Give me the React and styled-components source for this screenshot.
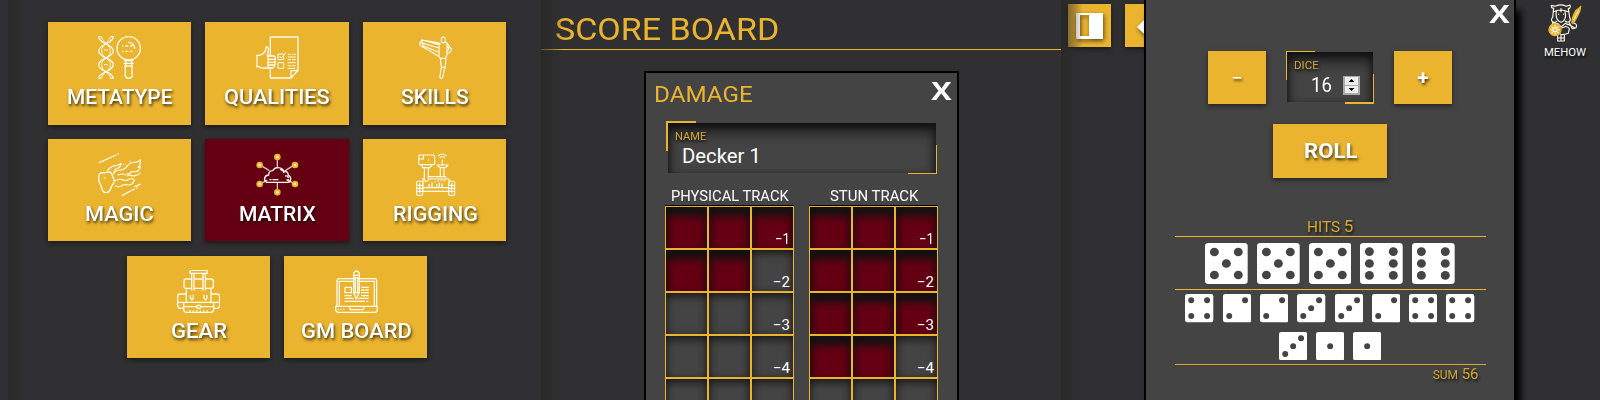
import React, { useLayoutEffect, useRef, useState } from "react";
import styled, { createGlobalStyle, css } from "styled-components";

const gold = "#ebb42f";
const crimson = "#650013";
const slate = "#444444";
const base = "#303032";

const GlobalStyle = createGlobalStyle`
  * { box-sizing: border-box; }
  body { margin: 0; background: ${base}; overflow: hidden; }
  #root { font-family: Roboto, "Liberation Sans", sans-serif; color: #fff; }
`;

/* ---------- text ---------- */

const FitBox = styled.span`
  display: inline-block;
  white-space: pre;
  text-align: left;
`;

const FitText = styled.span`
  display: inline-block;
  transform-origin: left center;
`;

// Stretches its text sideways until it spans the given width.
function Fit({ width, children }) {
  const ref = useRef(null);
  const [scale, setScale] = useState(1);
  useLayoutEffect(() => {
    setScale(width / ref.current.offsetWidth);
  }, [width, children]);
  return (
    <FitBox style={{ width }}>
      <FitText ref={ref} style={{ transform: `scaleX(${scale})` }}>{children}</FitText>
    </FitBox>
  );
}

/* ---------- page ---------- */

const Page = styled.div`
  display: flex;
  width: 1600px;
  height: 400px;
  overflow: hidden;
  background: ${base};
  position: relative;
`;

const Column = styled.section`
  flex: none;
  width: ${(p) => p.$w}px;
  height: 400px;
  position: relative;
  &::before {
    content: "";
    position: absolute;
    inset: 0 auto 0 0;
    width: 22px;
    background: linear-gradient(90deg, rgba(38, 38, 36, 0.7), rgba(42, 42, 42, 0.35) 60%, transparent);
    pointer-events: none;
    z-index: 1;
  }
`;

const Edge = styled.div`
  flex: none;
  width: 8px;
`;

/* ---------- menu ---------- */

const Tiles = styled.nav`
  display: flex;
  flex-wrap: wrap;
  justify-content: center;
  gap: 14.3px;
  padding: 22px 29px 0 34px;
`;

const raised = css`
  border: 0;
  background: ${gold};
  color: #fff;
  box-shadow: 0 2px 5px rgba(0, 0, 0, 0.5);
  text-shadow: 1px 2px 3px rgba(0, 0, 0, 0.75);
`;

const Tile = styled.button`
  ${raised}
  background: ${(p) => (p.$active ? crimson : gold)};
  width: 143.3px;
  height: 102.5px;
  padding: 14px 0 0 1px;
  display: flex;
  flex-direction: column;
  align-items: center;
  gap: 8px;
  font: 500 20.5px/20px Roboto, "Liberation Sans", sans-serif;
`;

const Icon = styled.svg`
  display: block;
  flex: none;
  width: ${(p) => p.$w || 43}px;
  height: ${(p) => p.$h || 43}px;
  fill: none;
  stroke: #fffaf0;
  stroke-width: 4;
  stroke-linecap: round;
  stroke-linejoin: round;
`;

const DnaIcon = () => (
  <Icon viewBox="294 108 129 129">
    <path d="M296 110c1 22 44 22 44 43s-44 20-44 41 43 20 44 41M340 110c-1 22-44 22-44 43s44 20 44 41-43 20-44 41" />
    <path d="M304 110c2 14 27 24 27 43s-26 23-26 41 25 26 27 41M332 110c-2 14-27 24-27 43s26 23 26 41-25 26-27 41M296 110h8M332 110h8M296 235h8M332 235h8M313 150h10M313 194h10" strokeWidth="2.6" />
    <circle cx="386" cy="145" r="35" />
    <path d="M386 127q16 2 18 18M368 138v1M377 138h6M391 138h5M368 154v1M377 154h6M391 154h5" />
    <path d="M374 182h24M372 190h28M374 198h24M376 198v29q1 8 10 8t10-8v-29M377 182v16M395 182v16" />
  </Icon>
);

const FormIcon = () => (
  <Icon viewBox="767 108 129 129">
    <path d="M810 165v-54h83v100l-21 23h-62v-28M872 234v-22h21" />
    <path d="M769 166h7c15-2 21-9 21-25q8-1 7 10l-3 17h21q6 4 1 9 5 5 0 9 4 5-1 9 1 7-6 9h-25q-10 1-15-4l-7-1M770 167v34M803 169v34M804 178h20M804 187h20M804 195h20" />
    <path d="M834 162h16v17h-16zM834 188h16v17h-16zM838 169l5 5 13-16M863 163h8M877 163h8M863 171h22M863 179h8M876 179h9M863 188h22M863 197h9M877 197h8M863 205h20" strokeWidth="3" />
  </Icon>
);

const KickIcon = () => (
  <Icon viewBox="219 108 129 129">
    <path d="M301 115q6-9 12 0v9q-6 10-12 0zM298 132q-3-3-10-4l-45-8-7 9 2 8 31 17 26 16 3 6 17-2 3-12 9-5 5-8-13-19-6-3-10 1M294 134v32M243 120l51 14M239 128l55 16M246 137l48 20M318 131v30M318 138q11 8 0 17M298 174l3 29-5 29q5 6 9 0l8-35 2-21M302 202h9M243 119l3 16" strokeWidth="3.4" />
  </Icon>
);

const MeteorIcon = () => (
  <Icon viewBox="294 459 129 129">
    <path d="M298 488l50-23M354 462h1M367 586l36-19M411 564l1-1M405 560l15-7" />
    <path d="M296 529q2-11 12-11 10 1 17-2 10-1 12 11l5 11q2 11-7 20-5 20-17 20-11 0-14-18-10-16-8-31zM313 534h1" />
    <path d="M321 513q11-16 29-17 8-1 13-6-1 12-11 15-10 4-11 17M341 520q6-10 20-10 14-1 21-13 11-12 25-10 9-1 14-8 2 17-7 23l7-2q-2 17-22 15-8-1-16 13M354 525q14-6 24 0M345 543q11-8 23-4 8 5 16 0 10-6 19 1-4 15-18 15-15-3-21 3-8 4-17 0M382 521q10 10 26 5 9-1 13-8M371 493h1M390 484h1" strokeWidth="3.5" />
  </Icon>
);

const CloudIcon = () => (
  <Icon viewBox="767 459 129 129">
    <path d="M831 478v25M786 499l20 12M875 499l-19 12M786 548l14-7M876 548l-14-7M831 569v-20" stroke="#d9bfc5" />
    <path d="M799 547q-8-4-6-13 3-9 12-9 0-12 12-13 6-10 16-9 15 1 17 11 13-2 14 12 8 3 7 13-1 8-9 8zM841 509q9 2 10 9M856 528q6-1 8 5M809 539h3M818 539h15M860 540h5" />
    {[[831, 471], [778, 495], [884, 495], [778, 552], [884, 552], [831, 577]].map(([x, y]) => (
      <circle key={`${x}-${y}`} cx={x} cy={y} r="7" fill="#fff3cc" stroke={gold} strokeWidth="6" />
    ))}
  </Icon>
);

const RoverIcon = () => (
  <Icon viewBox="219 459 129 129">
    <path d="M234 465h44q3 0 3 4v22q0 3-4 3h-40q-4 0-4-4zM247 466v11h-12M262 479v2M241 495l4 8h22l6-8M250 504v37q5 6 12 0v-37M288 495h33M290 497l6 6h18l6-6M298 504v26M309 504v26M304 480v14M292 467q12-10 24 0M297 473q7-6 14 0M262 530h52v7h10v12M246 538v-3h4M262 537h52M246 540v34M246 563h78M246 574h78M227 547q0-4 9-4 9 0 9 4v36q0 4-9 4-9 0-9-4zM323 547q0-4 9-4 9 0 9 4v36q0 4-9 4-9 0-9-4zM236 549v30M332 549v30M228 556h16M228 565h16M228 574h16M324 556h16M324 565h16M324 574h16" strokeWidth="3.4" />
    <path d="M264 553v9M273 549v13M287 553v9M295 549v13M303 552v10M281 545h1M291 542h1M301 542h1M310 542h1" />
  </Icon>
);

const PackIcon = () => (
  <Icon viewBox="231 90 129 129">
    <path d="M274 91h44q4 0 4 4v5h-52v-5q0-4 4-4zM275 102v48M282 102v48M309 102v48M316 102v48M282 117h27M274 117h-16q-6 0-6 7v15q0 6 6 6h17M316 117h18q6 0 6 7v15q0 6-6 6h-18M282 145h27M259 147v41M333 147v41M258 162h-18q-7 0-7 8v26q0 9 8 9h9M333 162h18q8 0 8 8v26q0 9-8 9h-9M233 187h126M251 189v18q0 10 9 10h72q9 0 9-10v-18M252 200h37M303 200h37M291 196h10v9h-10zM271 166v8l5 6 4-6v-8M312 166v8l5 6 4-6v-8M270 217v-5M280 217v-5M290 217v-5M301 217v-5M311 217v-5M322 217v-5" />
  </Icon>
);

const LaptopIcon = () => (
  <Icon viewBox="702 90 129 129">
    <path d="M757 116h-42q-7 0-7 7v76M776 116h44q7 0 7 7v76M757 124h-42v73M776 124h44v73M704 199h125v9q0 9-8 9h-108q-9 0-9-9zM745 201l3 8h38l3-8M758 157v-58q8-12 17 0v58l-9 20zM758 106h17M758 114h17M763 116v41M770 116v41M758 158h17M732 142h19v16h-19zM782 142h20M782 150h7M794 150h8M782 158h20M732 167h19M782 167h20M732 175h24M774 175h28M732 184h58M797 184h4" />
    <path d="M711 208h1M719 208h1M728 208h1" />
  </Icon>
);

const TILES = [
  ["METATYPE", 105, DnaIcon],
  ["QUALITIES", 106, FormIcon],
  ["SKILLS", 68, KickIcon],
  ["MAGIC", 69, MeteorIcon],
  ["MATRIX", 77, CloudIcon],
  ["RIGGING", 85, RoverIcon],
  ["GEAR", 56, PackIcon],
  ["GM BOARD", 111, LaptopIcon],
];

/* ---------- score board ---------- */

const BoardTitle = styled.h1`
  margin: 0;
  height: 50px;
  padding: 12px 0 0 14px;
  border-bottom: 1px solid ${gold};
  color: ${gold};
  font-size: 31px;
  font-weight: 400;
  line-height: 36px;
`;

const Card = styled.article`
  width: 315px;
  height: 360px;
  margin: 21px 0 0 103px;
  border: 2px solid #000;
  background: ${slate};
  padding: 0 18px 0 20px;
`;

const CardHead = styled.header`
  display: flex;
  justify-content: space-between;
  align-items: flex-start;
  height: 48px;
  margin: 0 -13px 0 -12px;
  padding-top: 4px;
`;

const CardTitle = styled.h2`
  margin: 0;
  padding-top: 6px;
  color: ${gold};
  font-size: 22.5px;
  font-weight: 400;
  line-height: 22px;
`;

const Close = styled.button`
  display: block;
  border: 0;
  padding: 0;
  background: none;
  color: #fff;
  font: 700 25px/26px "Open Sans", sans-serif;
  transform: scaleX(1.22);
  transform-origin: right center;
`;

const Field = styled.label`
  display: block;
  position: relative;
  width: ${(p) => p.$w}px;
  height: ${(p) => p.$h}px;
  padding: ${(p) => p.$tl}px ${(p) => (p.$brx)}px ${(p) => p.$br}px ${(p) => p.$tl}px;
  &::before,
  &::after {
    content: "";
    position: absolute;
    width: 28px;
    height: 28px;
    border: 0 solid ${gold};
  }
  &::before {
    left: 0;
    top: 0;
    border-width: ${(p) => p.$tl}px 0 0 ${(p) => p.$tl}px;
  }
  &::after {
    right: 0;
    bottom: 0;
    border-width: 0 ${(p) => p.$brx}px ${(p) => p.$br}px 0;
  }
`;

const Well = styled.span`
  display: flex;
  flex-direction: column;
  height: 50px;
  padding: 7px 13px 0 7px;
  background: ${slate};
  box-shadow: inset 0 9px 15px -2px #111, inset 0 3px 7px rgba(0, 0, 0, 0.65);
`;

const Caption = styled.span`
  color: ${gold};
  font-size: 11.5px;
  line-height: 13px;
  text-shadow: 1px 2px 3px #000;
  opacity: 0.88;
`;

const Value = styled.span`
  display: flex;
  align-items: center;
  padding-left: ${(p) => p.$pad}px;
  font-size: 20.3px;
  line-height: 22px;
  margin-top: 2px;
`;

const Tracks = styled.div`
  display: flex;
  gap: 15px;
  margin: 8px -1px 0;
`;

const Track = styled.div`
  width: 129px;
`;

const TrackName = styled.div`
  height: 24px;
  padding: 4px 0 0 1px;
  text-align: center;
  font-size: 14.6px;
  line-height: 20px;
  border-bottom: 1px solid #000;
`;

const Cells = styled.div`
  display: grid;
  grid-template-columns: repeat(3, 43px);
  grid-auto-rows: 43px;
`;

const Cell = styled.div`
  display: flex;
  justify-content: flex-end;
  align-items: flex-end;
  padding: 0 3px;
  border: 1px solid ${gold};
  font-size: 15px;
  line-height: 18px;
  background: ${(p) => (p.$hit ? crimson : slate)};
  box-shadow: ${(p) =>
    p.$hit
      ? "inset 0 9px 8px #141112, inset 0 3px 9px rgba(15,15,15,.6)"
      : "inset 0 3px 10px rgba(0,0,0,.7)"};
`;

function DamageTrack({ name, width, hits }) {
  return (
    <Track>
      <TrackName><Fit width={width}>{name}</Fit></TrackName>
      <Cells>
        {Array.from({ length: 15 }, (_, i) => (
          <Cell key={i} $hit={i < hits}>
            {i % 3 === 2 && i < 12 && <Fit width={i === 2 ? 15 : 17}>{`−${(i + 1) / 3}`}</Fit>}
          </Cell>
        ))}
      </Cells>
    </Track>
  );
}

/* ---------- side ---------- */

const Toolbar = styled.div`
  display: flex;
  gap: 14px;
  padding: 4px 0 0 7px;
`;

const ToolButton = styled.button`
  ${raised}
  width: 43px;
  height: 43px;
  padding: 8px;
  flex: none;
  svg { display: block; filter: drop-shadow(1px 2px 2px rgba(0, 0, 0, 0.6)); }
`;

const Drawer = styled.aside`
  position: absolute;
  z-index: 3;
  left: 1144px;
  top: 0;
  width: 372px;
  height: 400px;
  border: solid #000;
  border-width: 0 2px;
  background: ${slate};
  box-shadow: 5px 10px 7px #000;
  display: flex;
  flex-direction: column;
  align-items: center;
`;

const DrawerHead = styled.div`
  align-self: stretch;
  display: flex;
  flex: none;
  justify-content: flex-end;
  align-items: flex-start;
  height: 51px;
  padding: 0 4px 0 0;
`;

const DiceRow = styled.div`
  display: flex;
  flex: none;
  gap: 20px;
`;

const Push = styled.button`
  ${raised}
  width: ${(p) => p.$w}px;
  height: ${(p) => p.$h}px;
  padding: 0;
  font: ${(p) => p.$weight || 700} 20.5px/22px Roboto, "Liberation Sans", sans-serif;
`;

const RollRow = styled.div`
  flex: none;
  padding: 20px 0 0;
  height: 114px;
`;

const Spinner = styled.svg`
  display: block;
  margin-left: 11px;
  margin-top: 1px;
`;

const Results = styled.div`
  flex: none;
  width: 311px;
  color: ${gold};
  text-shadow: 1px 2px 3px #000;
`;

const Hits = styled.div`
  height: 18px;
  padding-top: 4px;
  display: flex;
  justify-content: center;
  align-items: baseline;
  gap: 4px;
  font-size: 14px;
  line-height: 8px;
  opacity: 0.88;
  b { font-size: 17px; font-weight: 400; }
`;

const Pool = styled.div`
  display: flex;
  flex-wrap: wrap;
  justify-content: center;
  align-items: center;
  gap: ${(p) => p.$gap};
  height: ${(p) => p.$h}px;
  padding: 0 7px;
  align-content: center;
  border-top: 1px solid ${gold};
`;

const Sum = styled.div`
  display: flex;
  justify-content: flex-end;
  align-items: baseline;
  gap: 4px;
  border-top: 1px solid ${gold};
  padding: 1px 7px 0 0;
  font-size: 12px;
  line-height: 16px;
  opacity: 0.88;
  b { font-size: 15px; font-weight: 400; }
`;

const PIPS = {
  1: [[50, 50]],
  2: [[22, 78], [78, 22]],
  3: [[22, 78], [50, 50], [78, 22]],
  4: [[22, 22], [78, 22], [22, 78], [78, 78]],
  5: [[22, 22], [78, 22], [50, 50], [22, 78], [78, 78]],
  6: [[22, 21], [78, 21], [22, 50], [78, 50], [22, 79], [78, 79]],
};

const DieFace = styled.svg`
  display: block;
  flex: none;
`;

function Die({ n, w, h }) {
  return (
    <DieFace width={w} height={h} viewBox="0 0 100 100" preserveAspectRatio="none">
      <rect width="100" height="100" rx="8" fill="#fff" />
      {PIPS[n].map(([x, y]) => (
        <circle key={`${x}-${y}`} cx={x} cy={y} r="10.5" fill={slate} />
      ))}
    </DieFace>
  );
}

const User = styled.div`
  position: absolute;
  z-index: 4;
  right: 13px;
  top: 4px;
  width: 44px;
  display: flex;
  flex-direction: column;
  align-items: center;
  gap: 4px;
  font-size: 11.3px;
  line-height: 14px;
  text-shadow: 1px 2px 3px #000;
`;

const ValkyrieIcon = () => (
  <Icon viewBox="1104 12 100 114" $w={33.3} $h={38}>
    <path d="M1176 68q-1-15 12-37 10-5 14-12-1 17-10 30-5 12-13 22z" fill={gold} stroke={gold} />
    <path d="M1182 59q5-14 14-27" strokeWidth="3" />
    <path d="M1121 24q-8 2-7-8 8 3 14 2 14-7 29 0 7 1 13-3 4 8-5 13M1121 24l-3 28q-8 8 1 14 7 3 11-2M1165 25l4 27q5 8-2 13-6 3-11-2M1121 35q20-10 44 0M1129 35q-4 25 14 32 18-7 12-32M1143 26v9M1136 42v1M1151 42v1M1118 69l-2 9M1117 69l17 2 9 10 13-11 8 4M1146 84l12-5M1163 72l22 12M1167 66l10 20M1184 70q9 5 4 13l-8 3M1160 81q10 1 7 10l-2 9q-10 4-20 4l-10-5M1133 105v18h20v-20M1143 105v18M1133 114h20" strokeWidth="3.4" />
    <circle cx="1125" cy="89" r="18" fill={gold} stroke={gold} />
    <circle cx="1125" cy="89" r="6" />
    <path d="M1125 76v2M1125 100v2M1112 89h2M1136 89h2M1116 80l1 1M1133 97l1 1M1116 98l1-1M1133 81l1-1" />
  </Icon>
);

export default function App() {
  return (
    <Page>
      <GlobalStyle />
      <Edge />
      <Column $w={533}>
        <Tiles>
          {TILES.map(([name, width, Glyph]) => (
            <Tile key={name} $active={name === "MATRIX"}>
              <Glyph />
              <Fit width={width}>{name}</Fit>
            </Tile>
          ))}
        </Tiles>
      </Column>

      <Column $w={520}>
        <BoardTitle><Fit width={224}>SCORE BOARD</Fit></BoardTitle>
        <Card>
          <CardHead>
            <CardTitle><Fit width={99}>DAMAGE</Fit></CardTitle>
            <Close>X</Close>
          </CardHead>
          <Field $w={271} $h={53} $tl={2} $br={1} $brx={1}>
            <Well>
              <Caption><Fit width={31}>NAME</Fit></Caption>
              <Value $pad={7}><Fit width={79}>Decker 1</Fit></Value>
            </Well>
          </Field>
          <Tracks>
            <DamageTrack name="PHYSICAL TRACK" width={118} hits={5} />
            <DamageTrack name="STUN TRACK" width={88} hits={11} />
          </Tracks>
        </Card>
      </Column>

      <Column $w={539}>
        <Toolbar>
          <ToolButton>
            <svg width="27" height="27" viewBox="0 0 27 27">
              <path fill="#fff" fillRule="evenodd" d="M0 1h27v26H0zM4 3v21h9V3z" />
            </svg>
          </ToolButton>
          <ToolButton>
            <svg width="27" height="30" viewBox="0 0 27 30">
              <path fill="#fff" d="M4 15 15 4l11 11-11 11z" />
            </svg>
          </ToolButton>
        </Toolbar>
      </Column>

      <Drawer>
        <DrawerHead><Close>X</Close></DrawerHead>
        <DiceRow>
          <Push $w={58} $h={53} $weight={400}>−</Push>
          <Field $w={88} $h={53} $tl={1} $br={2} $brx={1}>
            <Well>
              <Caption><Fit width={25}>DICE</Fit></Caption>
              <Value $pad={17}>
                <Fit width={21}>16</Fit>
                <Spinner width="17" height="19" viewBox="0 0 17 19">
                  <path fill="#aaa" d="M0 0h17v19H0z" />
                  <path fill="#eee" d="M2 1h13v8H2zM2 10h13v7H2z" />
                  <path d="M5.5 6 8.5 3l3 3zM5.5 12h6l-3 3z" />
                </Spinner>
              </Value>
            </Well>
          </Field>
          <Push $w={58} $h={53}>+</Push>
        </DiceRow>
        <RollRow>
          <Push $w={114} $h={54}><Fit width={53}>ROLL</Fit></Push>
        </RollRow>
        <Results>
          <Hits><Fit width={33}>HITS</Fit><b>5</b></Hits>
          <Pool $gap="9px" $h={53}>
            {[5, 5, 5, 6, 6].map((n, i) => <Die key={i} n={n} w={42.7} h={41} />)}
          </Pool>
          <Pool $gap="9px" $h={75}>
            {[4, 2, 2, 3, 3, 2, 4, 4, 3, 1, 1].map((n, i) => <Die key={i} n={n} w={28.3} h={28.3} />)}
          </Pool>
          <Sum><Fit width={25}>SUM</Fit><b>56</b></Sum>
        </Results>
      </Drawer>

      <User>
        <ValkyrieIcon />
        <Fit width={42}>MEHOW</Fit>
      </User>
    </Page>
  );
}
